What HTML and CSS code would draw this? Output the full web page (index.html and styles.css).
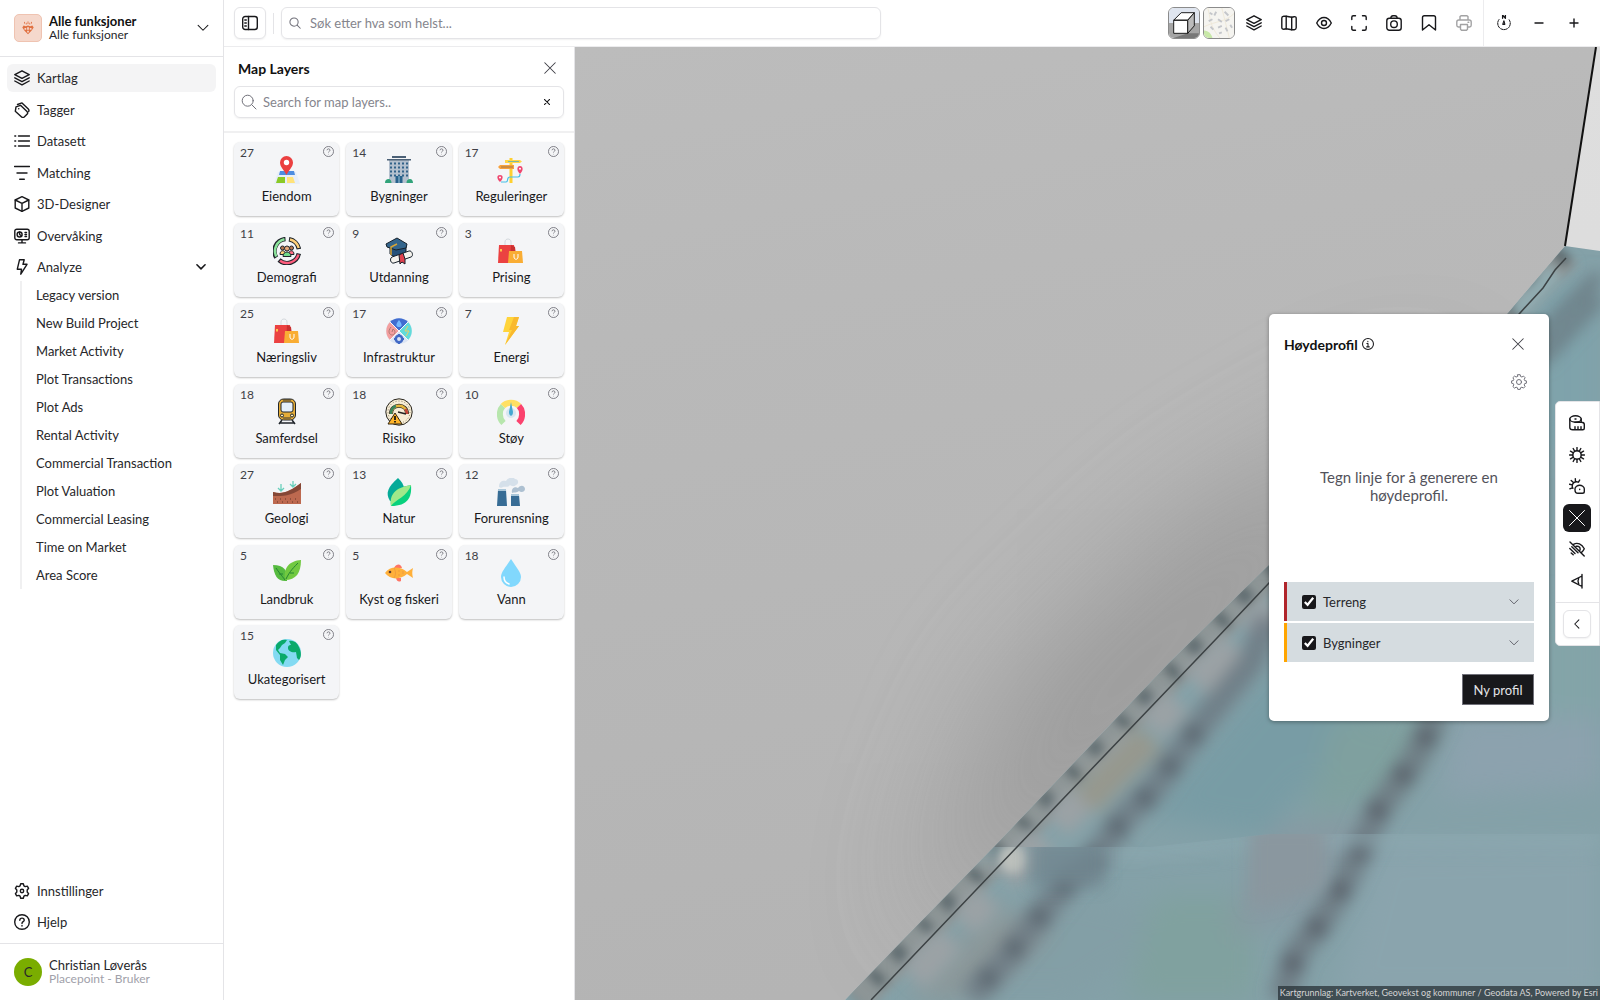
FILE: index.html
```html
<!DOCTYPE html>
<html lang="no">
<head>
  <meta charset="utf-8">
  <title>Kartlag</title>
  <link rel="stylesheet" href="styles.css">
</head>
<body>
  <svg class="sprite" aria-hidden="true">
    <symbol id="i-layers" viewBox="0 0 16 16"><path d="M8 .8 15.200 4.600 8 8.400.8 4.600z"/><path d="m.8 7.800 7.200 3.900 7.200-3.900M.8 11l7.200 3.900 7.200-3.900"/></symbol>
    <symbol id="i-tag" viewBox="0 0 16 16"><path d="M2 4.800 6.500 3.300 13 9.600c.8.8.8 1.800 0 2.600L10.200 15c-.8.7-1.800.7-2.600 0L1.300 9.300z"/><path d="M3.500 2.500 8 .9l6.300 6.200c.8.8.8 1.600.4 2.400"/><path d="M4.700 6.700h.1"/></symbol>
    <symbol id="i-list" viewBox="0 0 16 16"><path d="M4.500 3h11M4.500 8h11M4.500 13h11M.8 3h.9M.8 8h.9M.8 13h.9"/></symbol>
    <symbol id="i-filter" viewBox="0 0 16 16"><path d="M.5 1.500h15M3 8h10M5.700 14.300h4.600"/></symbol>
    <symbol id="i-cube" viewBox="0 0 16 16"><path d="M8 .7 14.800 4v8L8 15.300 1.200 12V4z"/><path d="M1.200 4 8 7.400 14.800 4M8 7.400v7.900"/></symbol>
    <symbol id="i-monitor" viewBox="0 0 16 16"><rect x=".8" y="1.200" width="14.400" height="10.600" rx="2"/><path d="M8 12v2.600M4.500 14.900h7"/><circle cx="5.600" cy="6.500" r="2.500"/><path d="M5.600 4v2.500l2 1.400M11 4.500h1.500M11 6.500h1.500M11 8.500h1.500"/></symbol>
    <symbol id="i-bolt" viewBox="0 0 16 16"><path d="M5.500.8h4.700L9 5.300h4L6.800 15.200l.7-5H3.300z"/></symbol>
    <symbol id="i-gear" viewBox="0 0 16 16"><path d="M6.700.8h2.600l.6 2 1.300.8 2.100-.5 1.300 2.200L13.200 7v2l1.400 1.700-1.300 2.200-2.100-.5-1.300.8-.6 2H6.700l-.6-2-1.300-.8-2.100.5-1.300-2.200L2.800 9V7L1.400 5.300l1.300-2.200 2.100.5 1.300-.8z"/><circle cx="8" cy="8" r="1.700"/></symbol>
    <symbol id="i-cog" viewBox="0 0 16 16"><path d="M6.800.7h2.400l.4 1.800 1.300.5 1.600-.9 1.600 1.600-.9 1.600.5 1.300 1.700.3v2.300l-1.700.4-.5 1.300.9 1.600-1.600 1.600-1.600-.9-1.300.5-.4 1.700H6.800l-.4-1.700-1.300-.5-1.600.9-1.600-1.600.9-1.600-.5-1.300-1.700-.4V6.900l1.700-.3.5-1.300-.9-1.600 1.600-1.600 1.600.9 1.300-.5z"/><circle cx="8" cy="8" r="2.500"/></symbol>
    <symbol id="i-help" viewBox="0 0 16 16"><circle cx="8" cy="8" r="7.300"/><path d="M5.800 6.200c.1-2.800 4.400-2.800 4.400 0 0 1.500-2.200 1.500-2.200 3.200M8 11.500v.6"/></symbol>
    <symbol id="i-info" viewBox="0 0 16 16"><circle cx="8" cy="8" r="7.300"/><path d="M6.500 7.200H8v4.600M6.200 11.800h3.600M7.800 4.200v.8"/></symbol>
    <symbol id="i-down" viewBox="0 0 16 16"><path d="m1.500 4.500 6.500 6.500 6.500-6.500"/></symbol>
    <symbol id="i-left" viewBox="0 0 16 16"><path d="M10.500 2.500 5 8l5.500 5.500"/></symbol>
    <symbol id="i-x" viewBox="0 0 16 16"><path d="m1 1 14 14M15 1 1 15"/></symbol>
    <symbol id="i-search" viewBox="0 0 16 16"><circle cx="6.700" cy="6.700" r="5.500"/><path d="m10.800 10.800 4.200 4.200"/></symbol>
    <symbol id="i-panel" viewBox="0 0 16 16"><rect x=".7" y="1.500" width="14.600" height="13" rx="2.500"/><path d="M6.500 1.500v13M2.800 5h1.500M2.800 8h1.500M2.800 11h1.500"/></symbol>
    <symbol id="i-map" viewBox="0 0 16 16"><path d="M2.800 1.300h2.400l5.500.9 2.500-.5c1.400-.2 2 .5 2 1.600v9.400c0 1.200-.6 1.800-2 2h-2.500l-5.500-.9-2.400.5c-1.400 0-2-.6-2-1.800V3.100c0-1.100.7-1.700 2-1.800z"/><path d="M5.200 1.300v12.500M10.700 2.200v12.500"/></symbol>
    <symbol id="i-eye" viewBox="0 0 16 16"><path d="M.7 8C4.500.7 11.500.7 15.300 8 11.500 15.300 4.500 15.300.7 8z"/><circle cx="8" cy="8" r="2.500"/></symbol>
    <symbol id="i-expand" viewBox="0 0 16 16"><path d="M.8 4.500V2.300C.8 1.200 1.300.8 2.300.8h2.200M11.500.8h2.200c1 0 1.500.5 1.500 1.500v2.200M15.200 11.500v2.200c0 1-.5 1.500-1.500 1.500h-2.200M4.500 15.200H2.300c-1 0-1.500-.5-1.500-1.500v-2.200"/></symbol>
    <symbol id="i-camera" viewBox="0 0 16 16"><rect x=".8" y="3.300" width="14.400" height="11.900" rx="2.500"/><path d="M4.800 3.300C5 1.300 6 .8 7 .8h2c1 0 2 .5 2.200 2.500"/><circle cx="8" cy="9.200" r="3.300"/></symbol>
    <symbol id="i-bookmark" viewBox="0 0 16 16"><path d="M1.500 15V2.600C1.500 1.300 2 .8 3.300.8h9.400c1.300 0 1.800.5 1.800 1.800V15L8 9.700z"/></symbol>
    <symbol id="i-print" viewBox="0 0 16 16"><path d="M4 5V1.600L5 .8h6l1 .8V5M4 12H2.500C1.300 12 .8 11.500.8 10.300V7C.8 5.700 1.500 5 2.800 5h10.400c1.300 0 2 .7 2 2v3.300c0 1.200-.5 1.700-1.700 1.700H12M4.500 9.500h7v4.700l-1 1h-5l-1-1zM12 7.300h.8"/></symbol>
    <symbol id="i-compass" viewBox="0 0 16 16"><path stroke-dasharray="2.500 1" d="M3 4.500a6.300 6.300 0 1 0 10 0"/><path stroke-width="1.300" d="M6.600 3.300V0l2.800 3.300V0"/><path fill="#18181b" d="m8 6 1 3.500H7z"/></symbol>
    <symbol id="i-minus" viewBox="0 0 16 16"><path d="M4 8h8"/></symbol>
    <symbol id="i-plus" viewBox="0 0 16 16"><path d="M4 8h8M8 4v8"/></symbol>
    <symbol id="i-tape" viewBox="0 0 16 16"><ellipse cx="6.500" cy="4" rx="5.700" ry="3.200"/><path d="M.8 4v8.500c0 1.200 1.200 2.200 3 2.200h10c1 0 1.500-.6 1.500-1.500v-3.600c0-1.500-1-2.300-2.800-2.300H6M12.200 4v3.200M6 14.500v-2.700M9 14.500v-2.700M12 14.500v-2.700M6 4h1"/></symbol>
    <symbol id="i-sun" viewBox="0 0 16 16"><circle cx="8" cy="8" r="4.200"/><path d="M8 .5v3.200M8 12.300v3.200M.5 8h3.200M12.300 8h3.200M4.200 1.500l1.600 2.800M10.200 11.700l1.600 2.800M1.500 4.200l2.800 1.600M11.700 10.200l2.800 1.600M1.500 11.800l2.800-1.600M11.700 5.800l2.800-1.600M4.200 14.500l1.600-2.800M10.200 4.300l1.600-2.800"/></symbol>
    <symbol id="i-shade" viewBox="0 0 16 16"><path d="M6 11.700v-.9c0-2 2.600-3.600 4.700-3.600 2 0 4.600 1.600 4.600 3.600v2.700c0 1-.8 1.800-1.800 1.800H9c-1.800 0-3-1.500-3-3.600zM10.700 11.200v.3M9.500 4.200C6.300 2.700 3.300 4.800 3.200 8c0 .8.3 1.700.7 2.300M6.300.7l.2 2.700M.5 6.200l2.900.7M2.200 2.500l2.200 2M9.500 4.200l1.200-2.200M.8 10.800l2.400-1"/></symbol>
    <symbol id="i-hide" viewBox="0 0 16 16"><path d="M1 1 15.200 15M4.500 3.300C8.500 1 12.800 3 15.300 7.800c-.7 1.500-1.500 2.500-2.500 3.300M7.200 5.300c2.700-.6 4.400 1.200 3.800 3.700M.8 7.500l5.200 5M2.800 5.800l6.200 6M2.200 12l2 1.800"/></symbol>
    <symbol id="i-view" viewBox="0 0 16 16"><path d="M2.800 8.200 13 3v10.500zM13 1.500V15M9.700 5.500c-1 1.700-1 3.500 0 5.300"/></symbol>
    <symbol id="i-line" viewBox="0 0 16 16"><path d="m.5.500 15 15M15.500.5l-15 15"/></symbol>

    <symbol id="c-pin" viewBox="0 0 28 28"><path fill="#e7eef8" d="M5 16h18l4 12H1z"/><path fill="#4d8de0" d="M7 15h14l1 4H6z"/><path fill="#8ac926" d="M5 21h7v6H3z"/><path fill="#ffe27a" d="M14 21h6l2 6h-8z"/><path fill="#eb4040" d="M13.500 19C11 14 7 11 7 6.500a6.500 6.500 0 0 1 13 0C20 11 16 14 13.500 19z"/><circle cx="13.500" cy="6.500" r="2.700" fill="#fff"/></symbol>
    <symbol id="c-building" viewBox="0 0 28 28"><path fill="#b4c0ce" d="M4 3h20v24H4z"/><path fill="#4b6076" d="M2 3h24v1.500H2zM7 0h14v2H7z"/><path stroke="#326289" stroke-width="2" stroke-dasharray="2 2" d="M5 7.500h18M5 11.500h18M5 15.500h18M5 19.500h18"/><path fill="#28628c" d="M10.500 20h7v7h-7z"/><path stroke="#9ec5d9" d="M14 20v7"/><path fill="#31a37a" d="M0 27c0-3 1.500-4 3.500-4 2 0 3 2 3 4zM21.500 27c0-3 1.500-4 3.500-4 2 0 3 2 3 4z"/></symbol>
    <symbol id="c-sign" viewBox="0 0 28 28"><path fill="#ffd02f" d="M12.500 2h3v25h-3z"/><path fill="#ffd648" d="M8 4h15l2 1.500L23 7H8z"/><path fill="#f7a13c" d="M3 9h14v4H3l-2-2z"/><path stroke="#7cb8a0" d="M11 5.500h11"/><path stroke="#9d7850" d="M4 11h12"/><path fill="none" stroke="#45bfe8" stroke-width="1.200" d="M4 26h5c3 0 0-5 4-5h8c2 0 2-2 2-3"/><path fill="#ef476f" d="M3 26c-4-4-3-7 0-7s4 3 0 7zM23 18c-4-4-3-8 0-8s4 4 0 8z"/><circle cx="3" cy="21.500" r="1" fill="#fff"/><circle cx="23" cy="12.700" r="1" fill="#fff"/></symbol>
    <symbol id="c-people" viewBox="0 0 28 28"><g fill="none" stroke="#20252b" stroke-width="4.500"><path d="M3.300 20.500A12 12 0 0 1 12.500 2.100"/><path d="M16 2.200A12 12 0 0 1 25.900 12"/><path d="M25.800 16.500A12 12 0 0 1 6 23"/></g><g fill="none" stroke-width="2.500"><path stroke="#8be39b" d="M3.300 19.500A12 12 0 0 1 11.500 2.300"/><path stroke="#ffd07a" d="M17 2.500A12 12 0 0 1 25.700 11"/><path stroke="#ff5d7d" d="M25.500 17.500A12 12 0 0 1 7 23.700"/></g><g stroke="#20252b"><path fill="#ffd07a" d="M7 17.500c0-5 5-5 6 0z"/><path fill="#ff6d83" d="M15 17.500c1-5 6-5 6 0z"/><circle cx="9.500" cy="11" r="2" fill="#b87851"/><circle cx="18.500" cy="11" r="2" fill="#b87851"/><path fill="#72db8a" d="M10 19.500c0-6 8-6 8 0z"/><circle cx="14" cy="11.500" r="2.500" fill="#e6a879"/></g></symbol>
    <symbol id="c-grad" viewBox="0 0 28 28"><g stroke="#17212b" stroke-linejoin="round"><path fill="#27527a" d="M5 9v8c4 4 12 4 16 0V8z"/><path fill="#34658c" d="M1 7 12 1l10 6-1 4-10 2-9-3z"/><path fill="#f5f3ee" d="m7 20 17-6c3-1 5 5 2 6L9 26c-3 1-5-4-2-6z"/><path fill="#e1414e" d="m14 18 4-2 2 6v5l-3-2-2 2z"/></g><path fill="none" stroke="#d9a534" stroke-width="1.500" d="m12 7-6 3v8"/></symbol>
    <symbol id="c-bags" viewBox="0 0 28 28"><path fill="none" stroke="#d5d9de" d="M8 9V5c0-4 6-4 6 0v4"/><path fill="#eb4141" d="M2 8h15l2 18H1z"/><path fill="#c93030" d="m14 8 4 2 2 16h-7z"/><path fill="#ffc44a" d="M3 12h2v2l-1 1-1-1z"/><path fill="#f9ad34" d="M12 14h13l1 12H11z"/><path fill="none" stroke="#fff" d="M17 17v3c0 3 4 3 4 0v-3"/></symbol>
    <symbol id="c-infra" viewBox="0 0 28 28"><circle cx="14" cy="14" r="13" fill="#dfe8f5"/><path fill="#416dd0" d="m14 14-9-9C10 0 18 0 23 5z"/><path fill="#f39f9f" d="M14 14 5 23C0 18 0 10 5 5z"/><path fill="#62dbda" d="m14 14 9-9c5 5 5 13 0 18z"/><path fill="#dce5f3" d="m14 14 9 9c-5 5-13 5-18 0z"/><path stroke="#f5f8fb" stroke-width="1" d="m5 5 18 18M23 5 5 23"/><path fill="#73b9ff" d="M14 3c-4 5-3 7 0 7s4-2 0-7z"/><path fill="none" stroke="#b07a73" d="M6 10c-4 5-1 8 1 8s5-3 1-6l-1 3"/><path fill="none" stroke="#e8cf6a" d="m23 9-3 5h4l-3 5"/><circle cx="14" cy="22" r="3.200" fill="none" stroke="#4169c5" stroke-width="2.500"/><path stroke="#4169c5" stroke-width="2" d="M14 17v2M14 25v2M9 22h2M17 22h2"/></symbol>
    <symbol id="c-energy" viewBox="0 0 28 28"><path fill="#ffd43b" d="M10 0h12l-3 9h3L8 28l4-13H6z"/><path fill="#f9b92f" d="M17 0h5l-3 9h3L8 28l7-15h-3z"/></symbol>
    <symbol id="c-train" viewBox="0 0 28 28"><path stroke="#20252b" stroke-width="1.500" d="m9 22-3 4M19 22l3 4M7 25h14"/><rect x="5.500" y="1" width="17" height="21" rx="5" fill="#e5ad38" stroke="#20252b"/><rect x="8" y="4" width="12" height="10" rx="2" fill="#e5f0fb" stroke="#20252b"/><path stroke="#333" d="M10 2h8M10 20h8"/><circle cx="9" cy="17.500" r="1.500" fill="#fff2c4" stroke="#20252b"/><circle cx="19" cy="17.500" r="1.500" fill="#fff2c4" stroke="#20252b"/></symbol>
    <symbol id="c-risk" viewBox="0 0 28 28"><circle cx="14" cy="14" r="13.200" fill="#f7edd5" stroke="#28251e"/><circle cx="14" cy="14" r="11" fill="none" stroke="#897e6a" stroke-dasharray="1 2"/><path fill="none" stroke="#332f28" stroke-width="4" d="M6 16c0-11 16-11 16 0"/><path fill="none" stroke="#e5b53b" stroke-width="2.500" d="M6 16c0-11 16-11 16 0"/><path fill="none" stroke="#39865c" stroke-width="2.500" d="M6 16c0-4 2-7 5-8"/><path fill="none" stroke="#c1443c" stroke-width="2.500" d="M20.500 11c1 2 1.500 3 1.500 5"/><path stroke="#222" stroke-width="1.500" d="m13 14 8 2"/><path fill="#ffb429" stroke="#332711" stroke-linejoin="round" d="m10 15 7 11H3z"/><path stroke="#332711" stroke-width="2" d="M10 18v4M10 23v1.500"/></symbol>
    <symbol id="c-noise" viewBox="0 0 28 28"><g fill="none" stroke-width="6"><path stroke="#b7e6ad" d="M6.500 25C1.500 20 2 12 6 8"/><path stroke="#ffe063" d="M6 8c4-4.500 12-4.500 16 0"/><path stroke="#fb426e" d="M22 8c4 4 4.500 12-.5 17"/></g><circle cx="14" cy="15" r="5" fill="#d7e7f1"/><path fill="#43a8d1" d="M14 4 12 14c0 5 4 5 4 0z"/></symbol>
    <symbol id="c-geo" viewBox="0 0 28 28"><path fill="#bd694f" d="M0 14c10 3 17-1 28-9v21H0z"/><path fill="#854736" d="M0 14c10 3 17-1 28-9v6C18 18 10 18 0 18z"/><path stroke="#814536" stroke-width="1.500" stroke-dasharray="1 4" d="M2 21h24M4 24h22"/><path fill="none" stroke="#69cfbc" stroke-width="1.300" d="M8 6v6M5 10l3 3 3-3M20 3v5M17 6l3 3 3-3"/></symbol>
    <symbol id="c-leaf" viewBox="0 0 28 28"><path fill="#05aa98" d="M13 0c7 6 9 15 1 24l-9-1C0 15 3 9 13 0z"/><path fill="#08d17d" d="M26 7c1 12-3 21-20 21C4 14 13 9 26 7z"/><path fill="#a0e88a" d="M26 7C14 9 4 14 6 28 10 22 23 18 26 7z"/></symbol>
    <symbol id="c-factory" viewBox="0 0 28 28"><path fill="#376c95" d="M1 12h8l1 16H0zM14 17h8l1 11h-9z"/><path fill="#a9c6d9" d="M1 11h8v2H1zM14 16h8v2h-8z"/><path fill="#d5e0ea" d="M2 9c0-6 4-7 7-6 2-4 8-4 9-2 4 0 4 5 1 6-2 2-5 1-6 0-2 3-5 1-7 2-1 1-3 1-4 0z"/><path fill="#adc0d1" d="M15 15c-1-5 3-7 6-5 3-4 7-2 7 1s-4 4-6 2c-2 2-5 1-7 2z"/></symbol>
    <symbol id="c-sprout" viewBox="0 0 28 28"><path fill="#56bb40" d="M0 6c11 0 15 5 14 16C5 23 1 17 0 6z"/><path fill="#71c940" d="M28 1c0 13-5 20-16 20C10 8 17 2 28 1z"/><path fill="none" stroke="#258532" d="M3 9c4 6 7 9 9 12M25 4c-7 7-9 10-12 16M6 15h4M17 14h4"/></symbol>
    <symbol id="c-fish" viewBox="0 0 28 28"><path fill="#ff7566" d="M9 9c3-5 7-4 8 0zM11 19c1 4 3 4 5 3v-3z"/><path fill="#ffb03b" d="M0 14C5 7 15 7 22 13l6-4c-1 4-1 6 0 10l-6-4C15 21 5 21 0 14z"/><circle cx="5" cy="13" r="1.300" fill="#5b3c32"/><path fill="none" stroke="#ef9d3c" d="M9 9c2 4 2 6 0 10M13 12h2M13 16h2M18 12v3"/></symbol>
    <symbol id="c-drop" viewBox="0 0 28 28"><path fill="#81d8fd" d="M14 0c5 8 10 13 10 18a10 10 0 0 1-20 0C4 13 9 8 14 0z"/><path fill="none" stroke="#fff" stroke-width="1.500" stroke-linecap="round" d="M7 18c0 4 2 6 5 7"/></symbol>
    <symbol id="c-globe" viewBox="0 0 28 28"><circle cx="14" cy="14" r="14" fill="#83daf2"/><path fill="#0aaa6b" d="M3 6c3-4 6-6 11-5l-2 3-3 2-2 3-2 2 2 3 5 1 3 3-3 3-2 5-3-5v-5l-4-5zM15 9c0-3 2-3 3-3l-2-4c4-1 8 1 10 6 2 4 3 9 0 13l-2-2-1-6c-4 1-8-1-8-4z"/></symbol>
  </svg>

  <div class="app">
    <aside class="sidebar">
      <button class="workspace">
        <span class="workspace-logo">
          <svg viewBox="0 0 16 16"><path d="M3 5 1.500 7.500 4 11l4 4 4-4 2.500-3.500L13 5l-2.500 1L8 5 5.500 6z"/><path class="gaps" d="M4 8h2v2H4zM7 7h2v3H7zM10 8h2v2h-2zM7 11h2v2H7z"/><path class="rays" d="M4 1v2M8 .5v3M12 1v2M6 2v2M10 2v2"/></svg>
        </span>
        <span class="two-lines"><strong>Alle funksjoner</strong><span>Alle funksjoner</span></span>
        <svg class="icon sm"><use href="#i-down"/></svg>
      </button>
      <nav class="menu">
        <div class="menu-main">
          <a href="#" class="menu-item active"><svg class="icon"><use href="#i-layers"/></svg>Kartlag</a>
          <a href="#" class="menu-item"><svg class="icon"><use href="#i-tag"/></svg>Tagger</a>
          <a href="#" class="menu-item"><svg class="icon"><use href="#i-list"/></svg>Datasett</a>
          <a href="#" class="menu-item"><svg class="icon"><use href="#i-filter"/></svg>Matching</a>
          <a href="#" class="menu-item"><svg class="icon"><use href="#i-cube"/></svg>3D-Designer</a>
          <a href="#" class="menu-item"><svg class="icon"><use href="#i-monitor"/></svg>Overvåking</a>
          <a href="#" class="menu-item"><svg class="icon"><use href="#i-bolt"/></svg>Analyze<svg class="icon caret"><use href="#i-down"/></svg></a>
        </div>
        <div class="submenu">
          <a href="#">Legacy version</a>
          <a href="#">New Build Project</a>
          <a href="#">Market Activity</a>
          <a href="#">Plot Transactions</a>
          <a href="#">Plot Ads</a>
          <a href="#">Rental Activity</a>
          <a href="#">Commercial Transaction</a>
          <a href="#">Plot Valuation</a>
          <a href="#">Commercial Leasing</a>
          <a href="#">Time on Market</a>
          <a href="#">Area Score</a>
        </div>
        <div class="menu-bottom">
          <a href="#" class="menu-item"><svg class="icon"><use href="#i-gear"/></svg>Innstillinger</a>
          <a href="#" class="menu-item"><svg class="icon"><use href="#i-help"/></svg>Hjelp</a>
        </div>
      </nav>
      <div class="user">
        <span class="avatar">C</span>
        <span class="two-lines"><span class="user-name">Christian Løverås</span><span class="user-role">Placepoint - Bruker</span></span>
      </div>
    </aside>

    <div class="main">
      <header class="topbar">
        <button class="box-button" aria-label="Sidemeny"><svg class="icon"><use href="#i-panel"/></svg></button>
        <span class="separator"></span>
        <label class="search top-search">
          <svg class="icon sm"><use href="#i-search"/></svg>
          <input type="text" placeholder="Søk etter hva som helst..." aria-label="Søk">
        </label>
        <div class="tools">
          <button class="tile" aria-label="3D">
            <svg viewBox="0 0 32 32"><path fill="#dfe5ef" d="M0 0h32v16H0z"/><path fill="#a5a5a5" d="M0 16h32v16H0z"/><path fill="#777" d="M20 27h12v5H5z"/><g stroke="#111" stroke-linejoin="round"><path fill="#fff" d="M5 13h15v14H5zM5 13l8-8h14l-7 8z"/><path fill="#bbb" d="m20 13 7-8v14l-7 8z"/></g></svg>
          </button>
          <button class="tile" aria-label="Bakgrunnskart">
            <svg viewBox="0 0 32 32"><path fill="#f5f4f0" d="M0 0h32v32H0z"/><path fill="#c8e8a8" d="M0 24c5 0 8 4 9 8H0z"/><path fill="none" stroke="#eee8d8" d="M4 0c3 10 2 20 13 32M0 20C12 14 23 15 32 6M19 0l8 32"/><path fill="none" stroke="#c4c6ca" stroke-width="2" d="m6 5 3 2M13 4l-2 4M22 4l4 4M5 14l4-2M15 12l4 3M23 14l4-2M7 20l3 3M15 21l4-2M23 21l2 4M16 27l3-1M28 18l2 3"/></svg>
          </button>
          <button aria-label="Kartlag"><svg class="icon"><use href="#i-layers"/></svg></button>
          <button aria-label="Kart"><svg class="icon"><use href="#i-map"/></svg></button>
          <button aria-label="Vis"><svg class="icon"><use href="#i-eye"/></svg></button>
          <button aria-label="Fullskjerm"><svg class="icon"><use href="#i-expand"/></svg></button>
          <button aria-label="Skjermbilde"><svg class="icon"><use href="#i-camera"/></svg></button>
          <button aria-label="Bokmerke"><svg class="icon"><use href="#i-bookmark"/></svg></button>
          <button aria-label="Skriv ut" disabled><svg class="icon"><use href="#i-print"/></svg></button>
        </div>
        <div class="tools zoom-tools">
          <button aria-label="Nord"><svg class="icon thin"><use href="#i-compass"/></svg></button>
          <button aria-label="Zoom ut"><svg class="icon"><use href="#i-minus"/></svg></button>
          <button aria-label="Zoom inn"><svg class="icon"><use href="#i-plus"/></svg></button>
        </div>
      </header>

      <div class="content">
        <section class="layers-panel">
          <div class="panel-head">
            <div class="panel-title">
              <h2>Map Layers</h2>
              <button class="close" aria-label="Lukk"><svg class="icon sm close-icon"><use href="#i-x"/></svg></button>
            </div>
            <div class="search">
              <svg class="icon thin"><use href="#i-search"/></svg>
              <input type="text" placeholder="Search for map layers.." aria-label="Search for map layers">
              <button class="clear" aria-label="Tøm"><svg class="icon"><use href="#i-x"/></svg></button>
            </div>
          </div>
          <div class="cards">
            <button class="card"><span class="count">27</span><svg class="help"><use href="#i-help"/></svg><svg class="pic"><use href="#c-pin"/></svg>Eiendom</button>
            <button class="card"><span class="count">14</span><svg class="help"><use href="#i-help"/></svg><svg class="pic"><use href="#c-building"/></svg>Bygninger</button>
            <button class="card"><span class="count">17</span><svg class="help"><use href="#i-help"/></svg><svg class="pic"><use href="#c-sign"/></svg>Reguleringer</button>
            <button class="card"><span class="count">11</span><svg class="help"><use href="#i-help"/></svg><svg class="pic"><use href="#c-people"/></svg>Demografi</button>
            <button class="card"><span class="count">9</span><svg class="help"><use href="#i-help"/></svg><svg class="pic"><use href="#c-grad"/></svg>Utdanning</button>
            <button class="card"><span class="count">3</span><svg class="help"><use href="#i-help"/></svg><svg class="pic"><use href="#c-bags"/></svg>Prising</button>
            <button class="card"><span class="count">25</span><svg class="help"><use href="#i-help"/></svg><svg class="pic"><use href="#c-bags"/></svg>Næringsliv</button>
            <button class="card"><span class="count">17</span><svg class="help"><use href="#i-help"/></svg><svg class="pic"><use href="#c-infra"/></svg>Infrastruktur</button>
            <button class="card"><span class="count">7</span><svg class="help"><use href="#i-help"/></svg><svg class="pic"><use href="#c-energy"/></svg>Energi</button>
            <button class="card"><span class="count">18</span><svg class="help"><use href="#i-help"/></svg><svg class="pic"><use href="#c-train"/></svg>Samferdsel</button>
            <button class="card"><span class="count">18</span><svg class="help"><use href="#i-help"/></svg><svg class="pic"><use href="#c-risk"/></svg>Risiko</button>
            <button class="card"><span class="count">10</span><svg class="help"><use href="#i-help"/></svg><svg class="pic"><use href="#c-noise"/></svg>Støy</button>
            <button class="card"><span class="count">27</span><svg class="help"><use href="#i-help"/></svg><svg class="pic"><use href="#c-geo"/></svg>Geologi</button>
            <button class="card"><span class="count">13</span><svg class="help"><use href="#i-help"/></svg><svg class="pic"><use href="#c-leaf"/></svg>Natur</button>
            <button class="card"><span class="count">12</span><svg class="help"><use href="#i-help"/></svg><svg class="pic"><use href="#c-factory"/></svg>Forurensning</button>
            <button class="card"><span class="count">5</span><svg class="help"><use href="#i-help"/></svg><svg class="pic"><use href="#c-sprout"/></svg>Landbruk</button>
            <button class="card"><span class="count">5</span><svg class="help"><use href="#i-help"/></svg><svg class="pic"><use href="#c-fish"/></svg>Kyst og fiskeri</button>
            <button class="card"><span class="count">18</span><svg class="help"><use href="#i-help"/></svg><svg class="pic"><use href="#c-drop"/></svg>Vann</button>
            <button class="card"><span class="count">15</span><svg class="help"><use href="#i-help"/></svg><svg class="pic"><use href="#c-globe"/></svg>Ukategorisert</button>
          </div>
        </section>

        <main class="map">
          <svg class="scene" viewBox="0 0 1025 953" preserveAspectRatio="xMidYMid slice" aria-hidden="true">
            <defs>
              <linearGradient id="wall" x1="0" y1="0" x2=".2" y2="1"><stop offset="0" stop-color="#bcbcbc"/><stop offset=".3" stop-color="#b9b9b9"/><stop offset="1" stop-color="#b4b4b4"/></linearGradient>
              <linearGradient id="sky" x1="0" y1="0" x2="0" y2="1"><stop offset="0" stop-color="#dedede"/><stop offset="1" stop-color="#d9d9d9"/></linearGradient>
              <filter id="b70" filterUnits="userSpaceOnUse" x="-200" y="-200" width="1500" height="1400"><feGaussianBlur stdDeviation="65"/></filter>
              <filter id="b14" filterUnits="userSpaceOnUse" x="0" y="0" width="1100" height="1100"><feGaussianBlur stdDeviation="14"/></filter>
              <filter id="b8" filterUnits="userSpaceOnUse" x="0" y="0" width="1100" height="1100"><feGaussianBlur stdDeviation="8"/></filter>
              <filter id="b5" filterUnits="userSpaceOnUse" x="0" y="0" width="1100" height="1100"><feGaussianBlur stdDeviation="5"/></filter>
              <clipPath id="wall-clip"><path d="M0 0h1021l-31 199-57 67-239 252-100 98-175 184-91 93-58 60H0z"/></clipPath>
              <clipPath id="roof-clip"><path d="m990 199 35 5v749H270l58-60 91-93 175-184 100-98 239-252z"/></clipPath>
              <clipPath id="seam-clip"><path d="M373 800h202l120-13h330v166H220z"/></clipPath>
            </defs>
            <rect width="1025" height="953" fill="url(#sky)"/>
            <g clip-path="url(#wall-clip)">
              <rect width="1025" height="953" fill="url(#wall)"/>
              <path d="m880 330-260 150-180 170-90 230 60-20 330-330z" fill="#8d8d8d" opacity=".8" filter="url(#b70)"/>
            </g>
            <g clip-path="url(#roof-clip)">
              <rect x="200" y="190" width="825" height="763" fill="#84a1a8"/>
              <g filter="url(#b14)">
                <path d="M700 620 570 770l120 20 130-150z" fill="#789ca5"/>
                <path d="M760 670h110l-50 80-90 20z" fill="#7fa09f"/>
                <path d="M880 670h145v70l-160 10z" fill="#8ca2ae"/>
                <path d="M960 240h65v160h-65z" fill="#7fa3ab"/>
                <path d="M960 560h65v110h-65z" fill="#83a4a8"/>
                <path d="M480 840 330 953h170l120-80z" fill="#839fa6"/>
                <path d="M580 850h100v103h-130z" fill="#80a19f"/>
                <path d="m800 800 225-5v158H760z" fill="#8aa4ad"/>
                <path d="m700 780 90-10-60 100-80 20z" fill="#8799a2"/>
                <path d="m420 860-90 93h60l90-70z" fill="#8b9799"/>
              </g>
              <g filter="url(#b5)" fill="none">
                <path d="M990 205 694 524 280 953" stroke="#8d9596" stroke-width="34"/>
                <path d="M990 205 694 524 280 953" stroke="#5f6c70" stroke-width="20" stroke-dasharray="12 24 16 19"/>
                <path d="m980 224-38 42" stroke="#91abb0" stroke-width="18"/>
              </g>
              <g filter="url(#b8)" fill="none">
                <path d="m700 560-90 85-160 165-120 130" stroke="#9ba2a5" stroke-width="32" stroke-dasharray="36 20 54 26"/>
                <path d="m575 690-65 65" stroke="#96988e" stroke-width="32"/>
                <path d="M1025 228 990 262l-45 52M1025 250l-60 66" stroke="#6a7a82" stroke-width="12"/>
                <path d="M694 570 676 615 621 683 599 713 575 746 549 770 524 806 493 833 464 870 430 913 396 950" stroke="#6c7982" stroke-width="26" opacity=".85"/>
                <path d="M621 683 599 713 575 746 549 770 524 806 493 833 464 870 430 913 396 950" stroke="#505a64" stroke-width="20" stroke-dasharray="10 30"/>
                <path d="M862 666 839 713 803 763 788 796 769 836 745 876 721 906 706 953" stroke="#6c767e" stroke-width="26" opacity=".8"/>
                <path d="M854 685 839 713 803 763 788 796 769 836 745 876 721 906 706 953" stroke="#535a64" stroke-width="20" stroke-dasharray="12 32"/>
              </g>
              <g clip-path="url(#seam-clip)">
                <path d="M373 804h202l120-13h330" fill="none" stroke="#8fabb3" stroke-width="22" opacity=".5" filter="url(#b8)"/>
                <circle cx="438" cy="812" r="14" fill="#bcc0bc" filter="url(#b5)"/>
                <path d="M455 790h75v50h-75z" fill="#6f858f" opacity=".8" filter="url(#b8)"/>
                <path d="M675 780h75v60l-75 20z" fill="#8a979f" filter="url(#b8)"/>
              </g>
            </g>
            <path d="m1021 0-31 199" stroke="#111" stroke-width="2" fill="none"/>
            <path d="m991 211-11 12-12 18-23 25-251 270-52 55-200 209-146 153" stroke="#3c4244" stroke-width="1.500" fill="none"/>
          </svg>

          <section class="profile">
            <div class="profile-head">
              <h2>Høydeprofil <svg class="icon info"><use href="#i-info"/></svg></h2>
              <button class="close" aria-label="Lukk"><svg class="icon sm close-icon"><use href="#i-x"/></svg></button>
            </div>
            <button class="close settings" aria-label="Innstillinger"><svg class="icon thin"><use href="#i-cog"/></svg></button>
            <p class="profile-empty">Tegn linje for å generere en høydeprofil.</p>
            <div class="profile-row terrain">
              <input type="checkbox" id="terreng" checked>
              <label for="terreng">Terreng</label>
              <svg class="icon"><use href="#i-down"/></svg>
            </div>
            <div class="profile-row buildings">
              <input type="checkbox" id="bygninger" checked>
              <label for="bygninger">Bygninger</label>
              <svg class="icon"><use href="#i-down"/></svg>
            </div>
            <button class="new-profile">Ny profil</button>
          </section>

          <div class="side-tools">
            <div class="side-list">
              <button aria-label="Mål"><svg class="icon"><use href="#i-tape"/></svg></button>
              <button aria-label="Sol"><svg class="icon"><use href="#i-sun"/></svg></button>
              <button aria-label="Skygge"><svg class="icon"><use href="#i-shade"/></svg></button>
              <button class="selected" aria-label="Høydeprofil"><svg class="icon thin"><use href="#i-line"/></svg></button>
              <button aria-label="Skjul"><svg class="icon"><use href="#i-hide"/></svg></button>
              <button aria-label="Siktlinje"><svg class="icon"><use href="#i-view"/></svg></button>
            </div>
            <div class="side-foot">
              <button class="box-button" aria-label="Skjul verktøy"><svg class="icon sm"><use href="#i-left"/></svg></button>
            </div>
          </div>

          <div class="attribution">Kartgrunnlag: Kartverket, Geovekst og kommuner / Geodata AS, Powered by Esri</div>
        </main>
      </div>
    </div>
  </div>
</body>
</html>
```
FILE: styles.css
```css
* {
  box-sizing: border-box;
}

body {
  margin: 0;
  font-family: Lato, "Open Sans", sans-serif;
  font-size: 13px;
  color: #27272a;
  background: #fff;
}

h2,
p {
  margin: 0;
}

a {
  color: inherit;
  text-decoration: none;
}

button,
input {
  font: inherit;
  color: inherit;
}

button {
  border: none;
  background: none;
  padding: 0;
  cursor: pointer;
}

.sprite {
  position: absolute;
  width: 0;
  height: 0;
}

.icon {
  width: 16px;
  height: 16px;
  flex: none;
  fill: none;
  stroke: #18181b;
  stroke-width: 1.4;
  stroke-linecap: round;
  stroke-linejoin: round;
}

.icon.sm {
  width: 12px;
  height: 12px;
}

.icon.thin {
  stroke-width: 1;
}

.app {
  display: flex;
  height: 100vh;
}

/* sidebar */

.sidebar {
  width: 224px;
  flex: none;
  display: flex;
  flex-direction: column;
  border-right: 1px solid #e4e4e7;
}

.workspace,
.user {
  display: flex;
  align-items: center;
  gap: 7px;
  padding: 0 14px;
  height: 57px;
  text-align: left;
}

.workspace {
  border-bottom: 1px solid #e4e4e7;
}

.workspace-logo {
  width: 28px;
  height: 28px;
  display: grid;
  place-items: center;
  border: 1px solid #efc3b1;
  border-radius: 5px;
  background: #f5d8cc;
}

.workspace-logo svg {
  width: 14px;
  height: 14px;
  fill: #e07142;
}

.workspace-logo .gaps {
  fill: #f5d8cc;
}

.workspace-logo .rays {
  stroke: #e07142;
}

.two-lines {
  flex: 1;
  display: flex;
  flex-direction: column;
  font-size: 12px;
  line-height: 14px;
}

.two-lines strong,
.user-name {
  font-size: 13px;
}

.two-lines strong {
  font-weight: 700;
  color: #111;
}

.menu {
  flex: 1;
  display: flex;
  flex-direction: column;
  padding: 7px;
}

.menu-main {
  height: 217px;
  display: flex;
  flex-direction: column;
  justify-content: space-between;
}

.menu-item {
  height: 28px;
  display: flex;
  align-items: center;
  gap: 7px;
  padding: 0 7px;
  border-radius: 6px;
}

.menu-item.active {
  background: #f4f4f5;
}

.caret {
  width: 10px;
  height: 10px;
  margin-left: auto;
  margin-right: 3px;
  stroke-width: 2.5;
}

.submenu {
  display: flex;
  flex-direction: column;
  margin-left: 13px;
  padding-left: 14px;
  border-left: 2px solid #f0f0f1;
}

.submenu a {
  line-height: 28px;
}

.menu-bottom {
  margin-top: auto;
  display: flex;
  flex-direction: column;
  gap: 3px;
}

.user {
  border-top: 1px solid #e4e4e7;
}

.avatar {
  width: 28px;
  height: 28px;
  border-radius: 50%;
  background: #7aad00;
  text-align: center;
  line-height: 28px;
}

.user-role {
  color: #a1a1aa;
}

/* top bar */

.main {
  flex: 1;
  min-width: 0;
  display: flex;
  flex-direction: column;
}

.topbar {
  height: 47px;
  flex: none;
  display: flex;
  align-items: center;
  padding: 0 10px;
  border-bottom: 1px solid #ececee;
}

.box-button {
  width: 32px;
  height: 32px;
  display: grid;
  place-items: center;
  border: 1px solid #e4e4e7;
  border-radius: 6px;
  background: #fff;
  box-shadow: 0 1px 2px rgba(0, 0, 0, 0.06);
}

.separator {
  width: 1px;
  height: 21px;
  margin: 0 7px;
  background: #e4e4e7;
}

.search {
  display: flex;
  align-items: center;
  gap: 6px;
  height: 32px;
  padding: 0 6px;
  border: 1px solid #e4e4e7;
  border-radius: 6px;
  box-shadow: 0 1px 2px rgba(0, 0, 0, 0.06);
}

.search input {
  flex: 1;
  min-width: 0;
  padding: 0;
  border: none;
  outline: none;
  background: none;
}

.search input::placeholder {
  color: #85858d;
}

.search > .icon {
  stroke: #71717a;
}

.top-search {
  flex: 0 1 600px;
  gap: 9px;
  padding: 0 7px;
}

.tools {
  display: flex;
  align-items: center;
  gap: 3px;
  margin-left: auto;
}

.tools button {
  width: 32px;
  height: 32px;
  display: grid;
  place-items: center;
}

.tools button:disabled {
  opacity: 0.4;
}

.tools .tile {
  border: 1px solid #8b8b8b;
  border-radius: 6px;
  overflow: hidden;
}

.tile svg {
  width: 30px;
  height: 30px;
}

.zoom-tools {
  margin-left: 3px;
  padding-left: 4px;
  height: 46px;
  border-left: 1px solid #ececee;
}

.content {
  flex: 1;
  min-height: 0;
  display: flex;
}

/* map layers */

.layers-panel {
  width: 351px;
  flex: none;
  border-right: 1px solid #e4e4e7;
}

.panel-head {
  padding: 6px 10px 13px;
  border-bottom: 2px solid #f0f0f1;
}

.panel-title {
  display: flex;
  align-items: center;
  justify-content: space-between;
  height: 30px;
  margin-bottom: 3px;
  padding: 0 4px;
}

h2 {
  font-size: 14px;
  font-weight: 700;
  color: #111;
}

.close {
  width: 20px;
  height: 20px;
  display: grid;
  place-items: center;
}

.close-icon {
  stroke: #3f3f46;
}

.clear {
  width: 20px;
  height: 20px;
  display: grid;
  place-items: center;
}

.clear .icon {
  width: 6px;
  height: 6px;
  stroke-width: 3;
}

.cards {
  display: grid;
  grid-template-columns: repeat(3, 1fr);
  align-content: space-between;
  column-gap: 7px;
  min-height: 557px;
  margin: 9px 10px;
}

.card {
  height: 74px;
  display: flex;
  flex-direction: column;
  align-items: center;
  gap: 4px;
  padding-top: 14px;
  border-radius: 6px;
  background: #f4f5f7;
  box-shadow: 0 1px 2px rgba(0, 0, 0, 0.25);
  color: #18181b;
  line-height: 16px;
  position: relative;
}

.pic {
  width: 28px;
  height: 28px;
}

.count {
  position: absolute;
  top: 4px;
  left: 6px;
  font-size: 12px;
  line-height: 14px;
  color: #3f3f46;
}

.help {
  position: absolute;
  top: 4px;
  right: 5px;
  width: 11px;
  height: 11px;
  fill: none;
  stroke: #6b6b73;
  stroke-width: 1.2;
}

/* map */

.map {
  flex: 1;
  min-width: 0;
  position: relative;
  overflow: hidden;
}

.scene {
  display: block;
  width: 100%;
  height: 100%;
}

.profile {
  position: absolute;
  top: 267px;
  right: 51px;
  width: 280px;
  padding: 20px 15px 16px;
  display: flex;
  flex-direction: column;
  border-radius: 5px;
  background: #fff;
  box-shadow: 0 1px 4px rgba(0, 0, 0, 0.35);
}

.profile-head {
  display: flex;
  align-items: center;
  justify-content: space-between;
  padding-right: 6px;
}

.profile-head h2 {
  display: flex;
  align-items: center;
  gap: 4px;
}

.info {
  width: 12px;
  height: 12px;
}

.settings {
  align-self: flex-end;
  margin: 18px 5px 0 0;
}

.settings .icon {
  stroke: #71717a;
}

.profile-empty {
  padding: 76px 30px 78px;
  text-align: center;
  font-size: 15px;
  line-height: 18px;
  color: #52525b;
}

.profile-row {
  height: 39px;
  display: flex;
  align-items: center;
  gap: 7px;
  margin-bottom: 2px;
  padding: 0 15px;
  border-left: 3px solid;
  background: #d5dce0;
}

.profile-row label {
  flex: 1;
}

.profile-row .icon {
  width: 10px;
  height: 10px;
  stroke: #52525b;
}

.profile-row input {
  width: 14px;
  height: 14px;
  margin: 0;
  accent-color: #18181b;
}

.terrain {
  border-left-color: #b0252b;
}

.buildings {
  border-left-color: #ffa500;
}

.new-profile {
  align-self: flex-end;
  width: 72px;
  height: 31px;
  margin-top: 10px;
  border: 1px solid #71717a;
  background: #18181b;
  color: #e4e4e7;
}

.side-tools {
  position: absolute;
  top: 354px;
  right: 0;
  width: 45px;
  border: 1px solid #e4e4e7;
  border-radius: 5px 0 0 5px;
  background: #fff;
}

.side-list {
  height: 200px;
  padding: 7px;
  display: flex;
  flex-direction: column;
  justify-content: space-between;
}

.side-list button {
  width: 28px;
  height: 28px;
  display: grid;
  place-items: center;
  border-radius: 6px;
}

.side-list .selected {
  background: #18181b;
}

.selected .icon {
  stroke: #fff;
}

.side-foot {
  padding: 7px;
  border-top: 1px solid #e4e4e7;
}

.side-foot .box-button {
  width: 28px;
  height: 28px;
}

.attribution {
  position: absolute;
  right: 0;
  bottom: 0;
  padding: 0 2px;
  overflow: hidden;
  white-space: nowrap;
  background: rgba(40, 50, 55, 0.75);
  color: #d4d4d4;
  font-size: 9px;
  line-height: 14px;
}
```
